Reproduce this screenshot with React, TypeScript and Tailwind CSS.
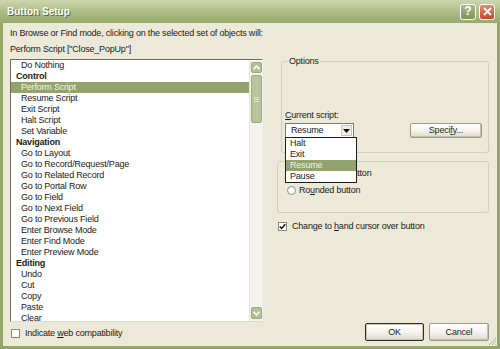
const font = "font-['Liberation_Sans',Arial,sans-serif]";

type Row = { label: string; header?: boolean; selected?: boolean };

const steps: Row[] = [
  { label: 'Do Nothing' },
  { label: 'Control', header: true },
  { label: 'Perform Script', selected: true },
  { label: 'Resume Script' },
  { label: 'Exit Script' },
  { label: 'Halt Script' },
  { label: 'Set Variable' },
  { label: 'Navigation', header: true },
  { label: 'Go to Layout' },
  { label: 'Go to Record/Request/Page' },
  { label: 'Go to Related Record' },
  { label: 'Go to Portal Row' },
  { label: 'Go to Field' },
  { label: 'Go to Next Field' },
  { label: 'Go to Previous Field' },
  { label: 'Enter Browse Mode' },
  { label: 'Enter Find Mode' },
  { label: 'Enter Preview Mode' },
  { label: 'Editing', header: true },
  { label: 'Undo' },
  { label: 'Cut' },
  { label: 'Copy' },
  { label: 'Paste' },
  { label: 'Clear' },
];

const scriptOptions = ['Halt', 'Exit', 'Resume', 'Pause'];

function Chevron({ up }: { up?: boolean }) {
  return (
    <svg width="7" height="5" viewBox="0 0 7 5">
      <path
        d={up ? 'M0.5 4.2L3.5 1.2L6.5 4.2' : 'M0.5 0.8L3.5 3.8L6.5 0.8'}
        stroke="#ffffff"
        strokeWidth="1.6"
        fill="none"
      />
    </svg>
  );
}

function ScrollBar() {
  return (
    <div className="w-[13px] flex flex-col items-center bg-[#f4f3ec] border-l border-[#e6e4d8]">
      <div className="mt-[2px] w-[11px] h-[11px] rounded-[2px] bg-[#b3c196] border border-[#9aab7a] flex items-center justify-center">
        <Chevron up />
      </div>
      <div className="mt-[2px] w-[11px] h-[48px] rounded-[2px] bg-[#b6c59a] border border-[#9cad7c] flex flex-col items-center justify-center gap-[1px]">
        <div className="w-[5px] h-px bg-[#dfe6cf]" />
        <div className="w-[5px] h-px bg-[#dfe6cf]" />
        <div className="w-[5px] h-px bg-[#dfe6cf]" />
      </div>
      <div className="flex-1" />
      <div className="mb-[2px] w-[11px] h-[12px] rounded-[2px] bg-[#b3c196] border border-[#9aab7a] flex items-center justify-center">
        <Chevron />
      </div>
    </div>
  );
}

function XpButton({ label, wide, isDefault }: { label: React.ReactNode; wide: string; isDefault?: boolean }) {
  return (
    <div
      className={`${wide} flex items-center justify-center rounded-[2px] bg-gradient-to-b from-[#ffffff] via-[#f4f3ee] to-[#dedbcb] text-[#1d1d1d] ${
        isDefault ? 'border border-[#2b2b2b] shadow-[inset_0_0_0_1px_#c9c6b5]' : 'border border-[#9a998c] shadow-[inset_-1px_-1px_0_#c2bfaf]'
      }`}
    >
      {label}
    </div>
  );
}

export default function App() {
  return (
    <div className={`${font} w-[500px] h-[349px] flex flex-col bg-[#94a56a] text-[9px] leading-[11px] tracking-[-0.2px] text-[#1a1a1a] overflow-hidden`}>
      {/* Title bar */}
      <div className="h-[23px] flex items-center justify-between pl-[7px] pr-[5px] bg-gradient-to-b from-[#cdd7ae] via-[#aebd86] to-[#98aa6c]">
        <span className="text-[10px] font-bold tracking-normal text-white [text-shadow:1px_1px_0_#5d6b3c]">
          Button Setup
        </span>
        <div className="flex items-center gap-[3px]">
          <div className="w-[16px] h-[16px] rounded-[3px] border border-white bg-gradient-to-b from-[#a9b98a] to-[#7d9358] flex items-center justify-center text-white text-[12px] font-bold tracking-normal">
            ?
          </div>
          <div className="w-[16px] h-[16px] rounded-[3px] border border-white bg-gradient-to-b from-[#e58a6b] to-[#c4462b] flex items-center justify-center">
            <svg width="9" height="9" viewBox="0 0 9 9">
              <path d="M1 1L8 8M8 1L1 8" stroke="#ffffff" strokeWidth="1.8" />
            </svg>
          </div>
        </div>
      </div>

      {/* Body */}
      <div className="relative flex-1 mx-[3px] mb-[3px] bg-[#ece9d8] flex pl-[7px] pr-[8px]">
        {/* Left column */}
        <div className="w-[253px] flex flex-col">
          <p className="mt-[5px] whitespace-nowrap">
            In Browse or Find mode, clicking on the selected set of objects will:
          </p>
          <p className="mt-[5px] whitespace-nowrap">Perform Script [&quot;Close_PopUp&quot;]</p>

          <div className="mt-[4px] h-[263px] flex border-t border-l border-[#6f6d61] border-r border-b border-r-[#f4f3ee] border-b-[#dcdacb]">
            <div className="flex-1 bg-white overflow-hidden">
              {steps.map((s) => (
                <div
                  key={s.label}
                  className={`h-[11px] whitespace-nowrap ${s.header ? 'pl-[5px] font-bold' : 'pl-[10px]'} ${
                    s.selected ? 'bg-[#94a26d] text-[#f2f4ea]' : ''
                  }`}
                >
                  {s.label}
                </div>
              ))}
            </div>
            <ScrollBar />
          </div>

          <div className="mt-[6px] flex items-center gap-[5px] pl-[1px]">
            <div className="w-[9px] h-[9px] bg-white border border-[#8a897c]" />
            <span>
              Indicate <span className="underline">w</span>eb compatibility
            </span>
          </div>
        </div>

        {/* Right column */}
        <div className="flex-1 ml-[14px] flex flex-col pt-[33px]">
          <fieldset className="ml-[4px] h-[97px] border border-[#d0cebd] rounded-[3px] flex flex-col pl-[3px]">
            <legend className="ml-[3px] px-[1px]">Options</legend>
            <p className="mt-[43px]">
              <span className="underline">C</span>urrent script:
            </p>
            <div className="mt-[2px] flex">
              <div className="relative w-[69px] h-[15px] bg-white border border-[#7b7a70] flex items-center">
                <span className="flex-1 pl-[5px]">Resume</span>
                <div className="mr-px w-[11px] h-[11px] bg-[#f1efe6] border border-[#c9c7b8] flex items-center justify-center">
                  <svg width="7" height="4" viewBox="0 0 7 4">
                    <path d="M0 0H7L3.5 4Z" fill="#111111" />
                  </svg>
                </div>
                <div className="absolute top-full -left-px w-[72px] bg-white border border-[#1d1d1d] z-10">
                  {scriptOptions.map((o) => (
                    <div
                      key={o}
                      className={`h-[11px] pl-[4px] ${o === 'Resume' ? 'bg-[#94a26d] text-[#eef1e4]' : ''}`}
                    >
                      {o}
                    </div>
                  ))}
                </div>
              </div>
              <div className="ml-[56px]">
                <XpButton
                  wide="w-[72px] h-[15px]"
                  label={
                    <span>
                      Speci<span className="underline">f</span>y...
                    </span>
                  }
                />
              </div>
            </div>
          </fieldset>

          <fieldset className="mt-[3px] h-[57px] border border-[#d0cebd] rounded-[3px] flex flex-col pl-[9px]">
            <legend className="ml-[7px] px-[1px]">Button style</legend>
            <div className="mt-[1px] h-[11px] flex items-center gap-[3px]">
              <div className="w-[9px] h-[9px] rounded-full bg-white border border-[#8a897c]" />
              <span>Rectangular button</span>
            </div>
            <div className="mt-[6px] h-[11px] flex items-center gap-[3px]">
              <div className="w-[9px] h-[9px] rounded-full bg-white border border-[#8a897c]" />
              <span>
                Ro<span className="underline">u</span>nded button
              </span>
            </div>
          </fieldset>

          <div className="mt-[8px] ml-[1px] h-[11px] flex items-center gap-[5px]">
            <div className="w-[9px] h-[9px] bg-white border border-[#8a897c] flex items-center justify-center">
              <svg width="7" height="7" viewBox="0 0 7 7">
                <path d="M0.8 3.4L2.7 5.4L6.3 1.2" stroke="#111111" strokeWidth="1.5" fill="none" />
              </svg>
            </div>
            <span>
              Change to <span className="underline">h</span>and cursor over button
            </span>
          </div>

          <div className="flex-1" />

          <div className="mb-[5px] flex justify-end gap-[5px]">
            <XpButton wide="w-[59px] h-[18px]" label="OK" isDefault />
            <XpButton wide="w-[60px] h-[18px]" label="Cancel" />
          </div>
        </div>

        {/* Resize grip */}
        <svg className="absolute right-0 bottom-0" width="10" height="10" viewBox="0 0 10 10">
          <path d="M9 2L2 9M9 5L5 9M9 8L8 9" stroke="#b4b29f" strokeWidth="1" />
        </svg>
      </div>
    </div>
  );
}
